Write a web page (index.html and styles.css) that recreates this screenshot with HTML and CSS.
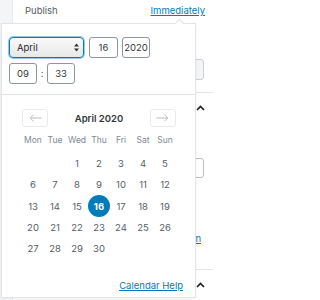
FILE: index.html
```html
<!DOCTYPE html>
<html>
<head>
<meta charset="utf-8">
<link rel="stylesheet" href="styles.css">
</head>
<body>
<div class="canvas"></div>
<div class="sidebar">
  <div class="publish-row">
    <span class="publish-label">Publish</span>
    <a class="link">Immediately</a>
  </div>
  <div class="under-input first"></div>
  <div class="under-divider"></div>
  <div class="under-head">
    <svg class="chev" width="9" height="6" viewBox="0 0 9 6"><polyline points="1,5 4.5,1.5 8,5" fill="none" stroke="#1e1e1e" stroke-width="1.6"/></svg>
  </div>
  <div class="under-input second"></div>
  <div class="under-link"><a class="link">Add New Option</a></div>
  <div class="under-divider low"></div>
  <div class="under-head last">
    <svg class="chev" width="9" height="6" viewBox="0 0 9 6"><polyline points="1,5 4.5,1.5 8,5" fill="none" stroke="#1e1e1e" stroke-width="1.6"/></svg>
  </div>
</div>

<div class="popover">
  <div class="arrow"></div>
  <div class="date-row">
    <div class="select">
      <span>April</span>
      <svg width="5" height="9" viewBox="0 0 5 9"><polygon points="0,3.6 5,3.6 2.5,0.4" fill="#32373c"/><polygon points="0,5.4 5,5.4 2.5,8.6" fill="#32373c"/></svg>
    </div>
    <div class="field day">16</div>
    <div class="field year">2020</div>
  </div>
  <div class="time-row">
    <div class="field hm">09</div>
    <span class="colon">:</span>
    <div class="field hm">33</div>
  </div>
  <div class="divider"></div>
  <div class="calendar">
    <div class="nav">
      <div class="nav-btn">
        <svg width="13" height="8" viewBox="0 0 13 8"><path d="M12.5 4H1.2M4.5 0.7L1.2 4l3.3 3.3" fill="none" stroke="#b5bcc2" stroke-width="1"/></svg>
      </div>
      <div class="month">April 2020</div>
      <div class="nav-btn">
        <svg width="13" height="8" viewBox="0 0 13 8"><path d="M0.5 4h11.3M8.5 0.7L11.8 4l-3.3 3.3" fill="none" stroke="#b5bcc2" stroke-width="1"/></svg>
      </div>
    </div>
    <div class="grid heads">
      <span>Mon</span><span>Tue</span><span>Wed</span><span>Thu</span><span>Fri</span><span>Sat</span><span>Sun</span>
    </div>
    <div class="grid days">
      <span></span><span></span><span>1</span><span>2</span><span>3</span><span>4</span><span>5</span>
      <span>6</span><span>7</span><span>8</span><span>9</span><span>10</span><span>11</span><span>12</span>
      <span>13</span><span>14</span><span>15</span><span class="sel">16</span><span>17</span><span>18</span><span>19</span>
      <span>20</span><span>21</span><span>22</span><span>23</span><span>24</span><span>25</span><span>26</span>
      <span>27</span><span>28</span><span>29</span><span>30</span><span></span><span></span><span></span>
    </div>
  </div>
  <div class="help"><a class="link">Calendar Help</a></div>
</div>
</body>
</html>
```

FILE: styles.css
```css
html, body {
  margin: 0;
  padding: 0;
}
html {
  background: #fff;
}
body {
  width: 213px;
  height: 300px;
  overflow: hidden;
  display: flex;
  position: relative;
  background: #f3f4f5;
  font-family: Inter, "Liberation Sans", sans-serif;
  color: #555d66;
}
.canvas {
  width: 12px;
  flex: none;
  background: #f4f5f6;
}
.sidebar {
  flex: 1;
  background: #fff;
  border-left: 1px solid #e8eaeb;
  display: flex;
  flex-direction: column;
}
.publish-row {
  height: 23px;
  display: flex;
  align-items: center;
  justify-content: space-between;
  padding: 0 8px 0 12px;
  font-size: 9.5px;
}
.link {
  color: #007cba;
  text-decoration: underline;
  font-size: 9.5px;
}
.under-input {
  height: 20px;
  margin: 38px 9px 0 12px;
  border: 1px solid #ccd0d4;
  border-radius: 3px;
  background: #f3f5f6;
}
.under-input.second {
  margin-top: 35px;
  background: #fff;
  border-color: #b8bec4;
}
.under-divider {
  height: 0;
  border-top: 1px solid #e2e4e7;
  margin-top: 12px;
}
.under-divider.low {
  margin-top: 25px;
}
.under-head {
  height: 32px;
  display: flex;
  justify-content: flex-end;
  align-items: center;
  padding-right: 8px;
}
.under-head.last {
  height: 32px;
}
.under-link {
  margin-top: 55px;
  display: flex;
  justify-content: flex-end;
  padding-right: 12px;
}

/* popover */
.popover {
  position: absolute;
  left: 1px;
  top: 23px;
  width: 193px;
  height: 273px;
  background: #fff;
  border: 1px solid #e2e4e7;
  box-shadow: 0 2px 6px rgba(0,0,0,0.05);
  display: flex;
  flex-direction: column;
}
.arrow {
  position: absolute;
  top: -4px;
  left: 174px;
  width: 6px;
  height: 6px;
  background: #fff;
  border-top: 1px solid #e2e4e7;
  border-left: 1px solid #e2e4e7;
  transform: rotate(45deg);
}
.date-row {
  display: flex;
  gap: 5px;
  padding: 13px 0 0 7px;
}
.select {
  width: 62px;
  height: 19px;
  border: 1px solid #007cba;
  box-shadow: 0 0 0 1px #9fc8e0;
  border-radius: 4px;
  background: linear-gradient(#f9f9f9, #e8e8e8);
  display: flex;
  align-items: center;
  justify-content: space-between;
  padding: 0 4px 0 7px;
  box-sizing: content-box;
  font-size: 9.5px;
  color: #23282d;
}
.field {
  height: 19px;
  border: 1px solid #8d96a0;
  border-radius: 3px;
  display: flex;
  align-items: center;
  justify-content: center;
  font-size: 9.5px;
  color: #32373c;
  box-sizing: content-box;
}
.day { width: 27px; }
.year { width: 26px; margin-left: -1px; }
.time-row {
  display: flex;
  align-items: center;
  padding: 5px 0 0 7px;
}
.hm { width: 26px; }
.colon {
  width: 10px;
  text-align: center;
  font-size: 9.5px;
  color: #555d66;
}
.divider {
  margin-top: 10px;
  border-top: 1px solid #e2e4e7;
}
.calendar {
  padding: 14px 0 0 20px;
  width: 154px;
}
.nav {
  display: flex;
  align-items: center;
  justify-content: space-between;
  height: 18px;
}
.nav-btn {
  width: 24px;
  height: 16px;
  border: 1px solid #e8eaeb;
  border-radius: 3px;
  display: flex;
  align-items: center;
  justify-content: center;
}
.month {
  font-size: 9.5px;
  font-weight: 600;
  color: #32373c;
}
.grid {
  display: grid;
  grid-template-columns: repeat(7, 22px);
}
.heads {
  margin-top: 5px;
  height: 16px;
  align-items: center;
  font-size: 8.5px;
  color: #7e8993;
}
.heads span, .days span {
  text-align: center;
}
.days {
  margin-top: 5px;
  grid-auto-rows: 21.3px;
  font-size: 9.5px;
  color: #555d66;
}
.days span {
  display: flex;
  align-items: center;
  justify-content: center;
}
.days .sel {
  justify-self: center;
  width: 22px;
  height: 22px;
  margin-top: -0.5px;
  border-radius: 50%;
  background: #007cba;
  color: #fff;
  font-weight: 700;
}
.help {
  margin-top: auto;
  display: flex;
  justify-content: flex-end;
  padding: 0 12px 6px 0;
}
```
